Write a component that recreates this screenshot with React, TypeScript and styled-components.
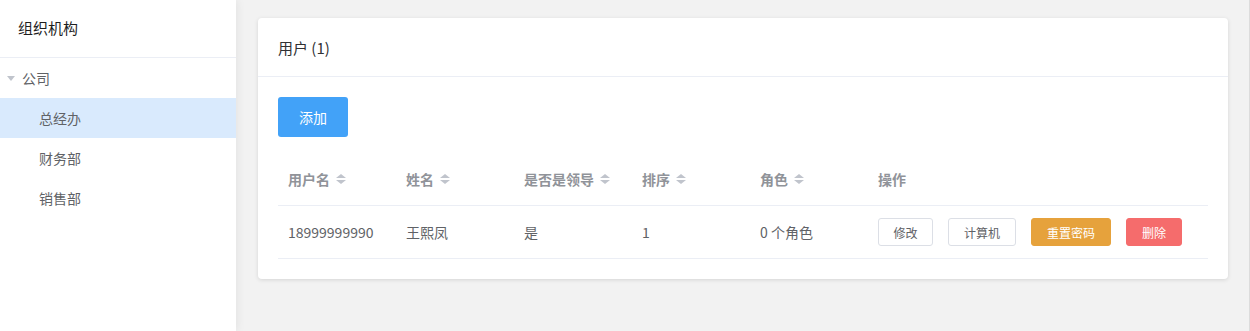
import React from 'react';
import styled, { createGlobalStyle } from 'styled-components';

const GlobalStyle = createGlobalStyle`
  html, body {
    margin: 0;
    padding: 0;
    background: #f2f2f2;
    font-family: "Microsoft YaHei", "Noto Sans CJK SC", "Liberation Sans", sans-serif;
    color: #606266;
  }
`;

const Layout = styled.div`
  display: flex;
  height: 331px;
  border-right: 1px solid #dcdcdc;
  box-sizing: border-box;
`;

const Sidebar = styled.aside`
  width: 236px;
  flex-shrink: 0;
  background: #fff;
  box-shadow: 2px 0 8px rgba(0, 0, 0, 0.06);
  position: relative;
  z-index: 1;
`;

const SidebarTitle = styled.div`
  height: 58px;
  line-height: 56px;
  padding-left: 18px;
  font-size: 15px;
  color: #1f1f1f;
  border-bottom: 1px solid #ebeef5;
  box-sizing: border-box;
`;

const TreeNode = styled.div<{ $active?: boolean; $depth: number }>`
  height: 40px;
  display: flex;
  align-items: center;
  padding-left: ${(p) => (p.$depth === 0 ? 6 : 39)}px;
  font-size: 14px;
  color: #606266;
  background: ${(p) => (p.$active ? '#d9eafd' : 'transparent')};
`;

const Caret = styled.span`
  width: 0;
  height: 0;
  border-left: 4px solid transparent;
  border-right: 4px solid transparent;
  border-top: 5px solid #c0c4cc;
  margin: 0 7px 0 1px;
`;

const Main = styled.main`
  flex: 1;
  padding: 18px 21px 0 22px;
`;

const Card = styled.section`
  background: #fff;
  border-radius: 4px;
  box-shadow: 0 1px 4px rgba(0, 0, 0, 0.12);
`;

const CardHeader = styled.div`
  height: 59px;
  line-height: 60px;
  padding-left: 20px;
  font-size: 15px;
  color: #303133;
  border-bottom: 1px solid #ebeef5;
  box-sizing: border-box;
`;

const CardBody = styled.div`
  padding: 20px 20px 20px;
`;

const PrimaryButton = styled.button`
  width: 70px;
  height: 40px;
  border: none;
  border-radius: 3px;
  background: #42a2f8;
  color: #fff;
  font-size: 14px;
  font-family: inherit;
`;

const Table = styled.div`
  margin-top: 16px;
`;

const Row = styled.div<{ $head?: boolean }>`
  display: grid;
  grid-template-columns: repeat(5, 118px) 1fr;
  height: 52px;
  align-items: center;
  border-bottom: 1px solid #ebeef5;
  font-size: 14px;
  color: ${(p) => (p.$head ? '#909399' : '#606266')};
  font-weight: ${(p) => (p.$head ? 700 : 400)};
`;

const Cell = styled.div`
  padding-left: 10px;
  display: flex;
  align-items: center;
  white-space: nowrap;
`;

const SortIcon = styled.span`
  display: inline-flex;
  flex-direction: column;
  gap: 2px;
  margin-left: 6px;
  &::before {
    content: '';
    border-left: 5px solid transparent;
    border-right: 5px solid transparent;
    border-bottom: 4px solid #c0c4cc;
  }
  &::after {
    content: '';
    border-left: 5px solid transparent;
    border-right: 5px solid transparent;
    border-top: 4px solid #c0c4cc;
  }
`;

const Actions = styled.div`
  display: flex;
  gap: 15px;
  padding-left: 10px;
`;

const variants = {
  plain: { bg: '#fff', border: '#dcdfe6', color: '#606266' },
  warning: { bg: '#e6a23c', border: '#e6a23c', color: '#fff' },
  danger: { bg: '#f56c6c', border: '#f56c6c', color: '#fff' },
};

const SmallButton = styled.button<{ $variant: keyof typeof variants; $w: number }>`
  width: ${(p) => p.$w}px;
  height: 28px;
  border-radius: 3px;
  border: 1px solid ${(p) => variants[p.$variant].border};
  background: ${(p) => variants[p.$variant].bg};
  color: ${(p) => variants[p.$variant].color};
  font-size: 12px;
  font-family: inherit;
  padding: 0;
`;

const columns = ['用户名', '姓名', '是否是领导', '排序', '角色'];

export default function App() {
  return (
    <>
      <GlobalStyle />
      <Layout>
        <Sidebar>
          <SidebarTitle>组织机构</SidebarTitle>
          <TreeNode $depth={0}><Caret />公司</TreeNode>
          <TreeNode $depth={1} $active>总经办</TreeNode>
          <TreeNode $depth={1}>财务部</TreeNode>
          <TreeNode $depth={1}>销售部</TreeNode>
        </Sidebar>
        <Main>
          <Card>
            <CardHeader>用户 (1)</CardHeader>
            <CardBody>
              <PrimaryButton>添加</PrimaryButton>
              <Table>
                <Row $head>
                  {columns.map((c) => (
                    <Cell key={c}>{c}<SortIcon /></Cell>
                  ))}
                  <Cell>操作</Cell>
                </Row>
                <Row>
                  <Cell>18999999990</Cell>
                  <Cell>王熙凤</Cell>
                  <Cell>是</Cell>
                  <Cell>1</Cell>
                  <Cell>0 个角色</Cell>
                  <Actions>
                    <SmallButton $variant='plain' $w={55}>修改</SmallButton>
                    <SmallButton $variant='plain' $w={68}>计算机</SmallButton>
                    <SmallButton $variant='warning' $w={80}>重置密码</SmallButton>
                    <SmallButton $variant='danger' $w={56}>删除</SmallButton>
                  </Actions>
                </Row>
              </Table>
            </CardBody>
          </Card>
        </Main>
      </Layout>
    </>
  );
}
